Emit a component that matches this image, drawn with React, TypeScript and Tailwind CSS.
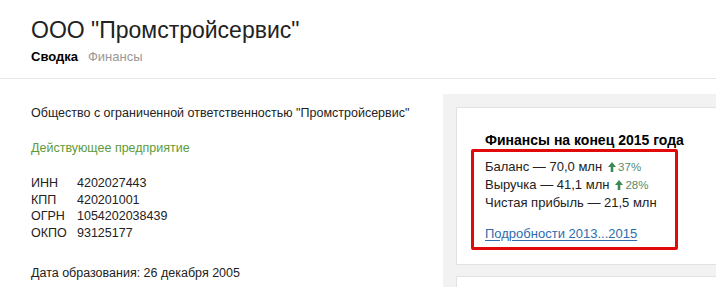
import React from 'react';

const UpArrow = () => (
  <svg width="8" height="10" viewBox="0 0 8 10" className="inline-block mr-[2px] -mt-[2px] align-middle">
    <path d="M4 0 L8 5 L5.3 5 L5.3 10 L2.7 10 L2.7 5 L0 5 Z" fill="#3b8a55" />
  </svg>
);

const codes = [
  { label: 'ИНН', value: '4202027443' },
  { label: 'КПП', value: '420201001' },
  { label: 'ОГРН', value: '1054202038439' },
  { label: 'ОКПО', value: '93125177' },
];

const App = () => {
  return (
    <div className="w-[716px] h-[287px] overflow-hidden bg-white text-[#222] font-['Liberation_Sans',Arial,sans-serif]">
      {/* Header */}
      <div className="px-[31px] pt-[16px] h-[79px] border-b border-[#e6e6e6]">
        <h1 className="text-[23px] leading-[28px] font-normal text-[#222]">ООО "Промстройсервис"</h1>
        <div className="flex gap-[10px] mt-[5px] text-[13px] leading-[16px]">
          <span className="font-bold text-black">Сводка</span>
          <span className="text-[#999]">Финансы</span>
        </div>
      </div>

      <div className="flex">
        {/* Left column */}
        <div className="w-[443px] shrink-0 pl-[31px] pt-[26px] text-[12.5px] leading-[16px] text-[#222]">
          <p>Общество с ограниченной ответственностью "Промстройсервис"</p>
          <p className="mt-[19px] text-[#5e9a3a]">Действующее предприятие</p>
          <div className="mt-[19px] grid grid-cols-[46px_1fr] leading-[16.5px]">
            {codes.map((c) => (
              <React.Fragment key={c.label}>
                <span>{c.label}</span>
                <span>{c.value}</span>
              </React.Fragment>
            ))}
          </div>
          <p className="mt-[24px]">Дата образования: 26 декабря 2005</p>
        </div>

        {/* Right panel */}
        <div className="flex-1 mt-[15px] bg-[#f2f2f2] pl-[13px] pt-[13px]">
          <div className="w-[300px] bg-white border border-[#e2e2e2] pl-[14px] pt-[23px] pb-[14px]">
            <h3 className="pl-[14px] text-[14px] leading-[18px] font-bold text-black">Финансы на конец 2015 года</h3>
            <div className="w-[207px] border-[3px] border-[#e10a0a] rounded-[2px] pl-[11px] pt-[6px] pb-[4px] text-[13px] leading-[18px] text-[#222]">
              <div>
                Баланс — 70,0 млн
                <span className="text-[11.5px] text-[#5a8a6c] ml-[6px]"><UpArrow />37%</span>
              </div>
              <div>
                Выручка — 41,1 млн
                <span className="text-[11.5px] text-[#5a8a6c] ml-[6px]"><UpArrow />28%</span>
              </div>
              <div>Чистая прибыль — 21,5 млн</div>
              <a href="#" className="block mt-[13px] text-[#2c6dae] underline underline-offset-2">Подробности 2013...2015</a>
            </div>
          </div>
          <div className="w-[300px] h-[20px] mt-[11px] bg-white border border-[#e2e2e2]" />
        </div>
      </div>
    </div>
  );
};

export default App;
